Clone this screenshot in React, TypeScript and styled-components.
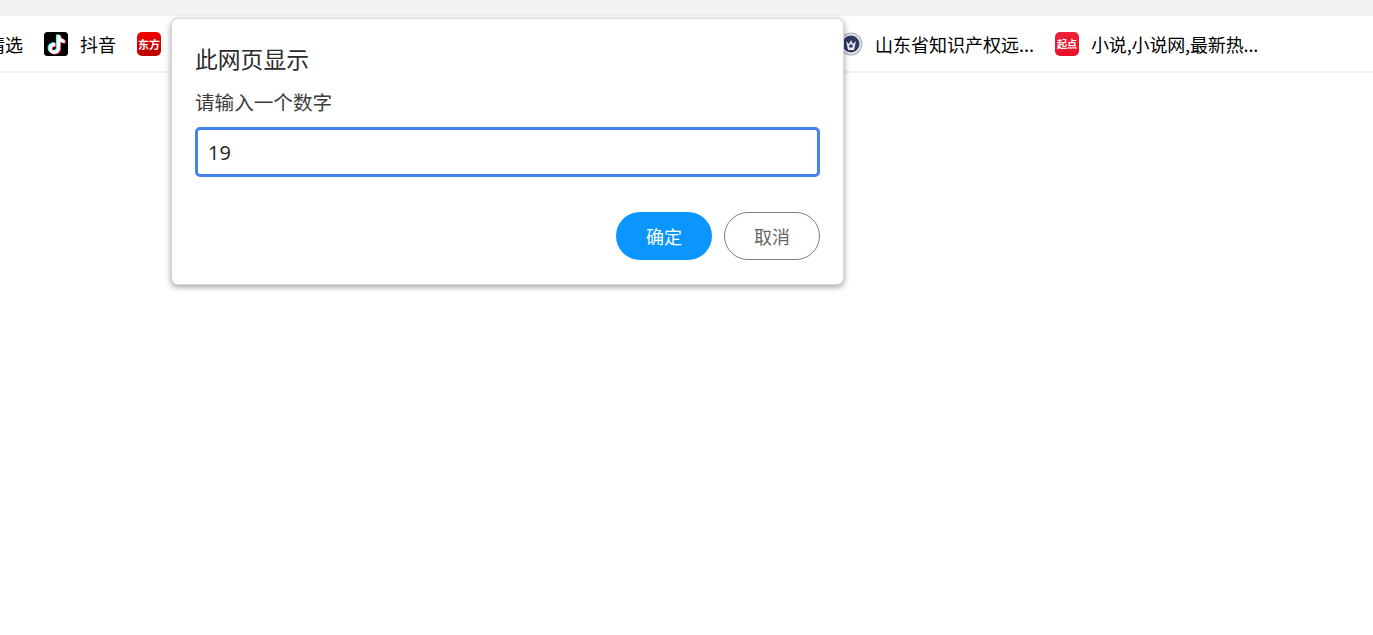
import React from "react";
import styled, { createGlobalStyle } from "styled-components";

const Global = createGlobalStyle`
  html, body { margin: 0; padding: 0; background: #fff; overflow: hidden; }
  body { font-family: "Noto Sans CJK SC", "Noto Sans", sans-serif; }
`;
const Page = styled.div`position: relative; width: 1373px; height: 635px; background: #fff; overflow: hidden;`;
const TopStrip = styled.div`height: 16px; background: #f1f2f4;`;
const Bar = styled.nav`
  height: 54px; border-bottom: 2px solid #eff0f1; background: #fff;
  display: flex; align-items: center; gap: 21px; padding-top: 1px; overflow: hidden;
`;
const Item = styled.div<{ $first?: boolean }>`
  display: flex; align-items: center; gap: 12px; flex: none; margin-left: ${p => (p.$first ? "-13px" : "0")};
`;
const Label = styled.span<{ $tight?: boolean }>`
  font-size: 18px; line-height: 24px; color: #000; white-space: nowrap; letter-spacing: ${p => (p.$tight ? "-0.15px" : "0")};
`;
const Gap = styled.div<{ $w: number }>`flex: none; width: ${p => p.$w}px;`;
const Badge = styled.span<{ $bg: string; $size: number }>`
  width: 24px; height: 24px; border-radius: 5px; background: ${p => p.$bg}; flex: none;
  display: flex; align-items: center; justify-content: center; color: #fff; font-size: ${p => p.$size}px; font-weight: 700; line-height: 1; white-space: nowrap;
`;
const Icon = styled.svg`width: 24px; height: 24px; flex: none; display: block;`;

const Dialog = styled.section`
  position: absolute; left: 171px; top: 18px; width: 673px; height: 267px; box-sizing: border-box;
  background: #fff; border: 1px solid #d9d9d9; border-radius: 7px; box-shadow: 0 2px 6px rgba(0,0,0,.38);
  padding: 23px 23px 24px 23px; display: flex; flex-direction: column;
`;
const Title = styled.h1`margin: 0; font-size: 22.8px; line-height: 34px; font-weight: 400; color: #2b2b2b;`;
const Message = styled.p`margin: 9px 0 0; font-size: 19.6px; line-height: 34px; color: #3c3c3c;`;
const Input = styled.input`
  margin-top: 8px; height: 50px; width: 100%; box-sizing: border-box; border: 3px solid #4484ee; border-radius: 5px;
  padding: 0 10px; outline: none; font: 400 20px "Open Sans", sans-serif; color: #222; background: #fff;
`;
const Actions = styled.div`margin-top: auto; display: flex; justify-content: flex-end; gap: 12px;`;
const Button = styled.button<{ $primary?: boolean }>`
  width: 96px; height: 48px; border-radius: 24px; box-sizing: border-box; font: 400 18px "Noto Sans CJK SC", sans-serif; padding: 0;
  background: ${p => (p.$primary ? "#0a95ff" : "#fff")}; color: ${p => (p.$primary ? "#fff" : "#666")};
  border: ${p => (p.$primary ? "none" : "1px solid #808080")};
`;

const note = "M12.800 3h3.400c.2 2.800 1.900 4.500 4.500 4.700v3.400c-1.700 0-3.200-.5-4.500-1.400v6.300c0 3.400-2.700 5.900-6 5.900-3.200 0-5.700-2.500-5.700-5.600 0-3.400 3.100-6 6.700-5.500v3.500c-1.700-.4-3.300.6-3.300 2.100 0 1.200 1 2.100 2.300 2.100 1.400 0 2.600-.9 2.600-2.600z";

const TikTok = () => (
  <Icon viewBox="0 0 24 24" aria-label="抖音">
    <rect width="24" height="24" rx="3.500" fill="#000" />
    <path d={note} fill="#25f4ee" transform="translate(-.9 -.6)" />
    <path d={note} fill="#fe2c55" transform="translate(.9 .6)" />
    <path d={note} fill="#fff" />
  </Icon>
);
const Seal = () => (
  <Icon viewBox="0 0 24 24">
    <circle cx="12" cy="12" r="11.500" fill="#b9bcc6" />
    <circle cx="12" cy="12" r="10" fill="#eef0f4" />
    <circle cx="12" cy="12" r="8.500" fill="#2c3763" />
    <path d="M7 9l3 3 2-4 2 4 3-3-2 9H9z" fill="#e8ebf2" />
    <circle cx="12" cy="14" r="1.800" fill="#2c3763" />
  </Icon>
);

export default function App() {
  return (
    <Page>
      <Global />
      <TopStrip />
      <Bar>
        <Item $first><Label>精选</Label></Item>
        <Item><TikTok /><Label>抖音</Label></Item>
        <Item><Badge $bg="linear-gradient(#f40000,#bb0000)" $size={11}>东方</Badge><Gap $w={645} /></Item>
        <Item><Seal /><Label>山东省知识产权远...</Label></Item>
        <Item><Badge $bg="linear-gradient(#f0213a,#e8122a)" $size={10}>起点</Badge><Label $tight>小说,小说网,最新热...</Label></Item>
      </Bar>
      <Dialog>
        <Title>此网页显示</Title>
        <Message>请输入一个数字</Message>
        <Input defaultValue="19" />
        <Actions>
          <Button $primary>确定</Button>
          <Button>取消</Button>
        </Actions>
      </Dialog>
    </Page>
  );
}
